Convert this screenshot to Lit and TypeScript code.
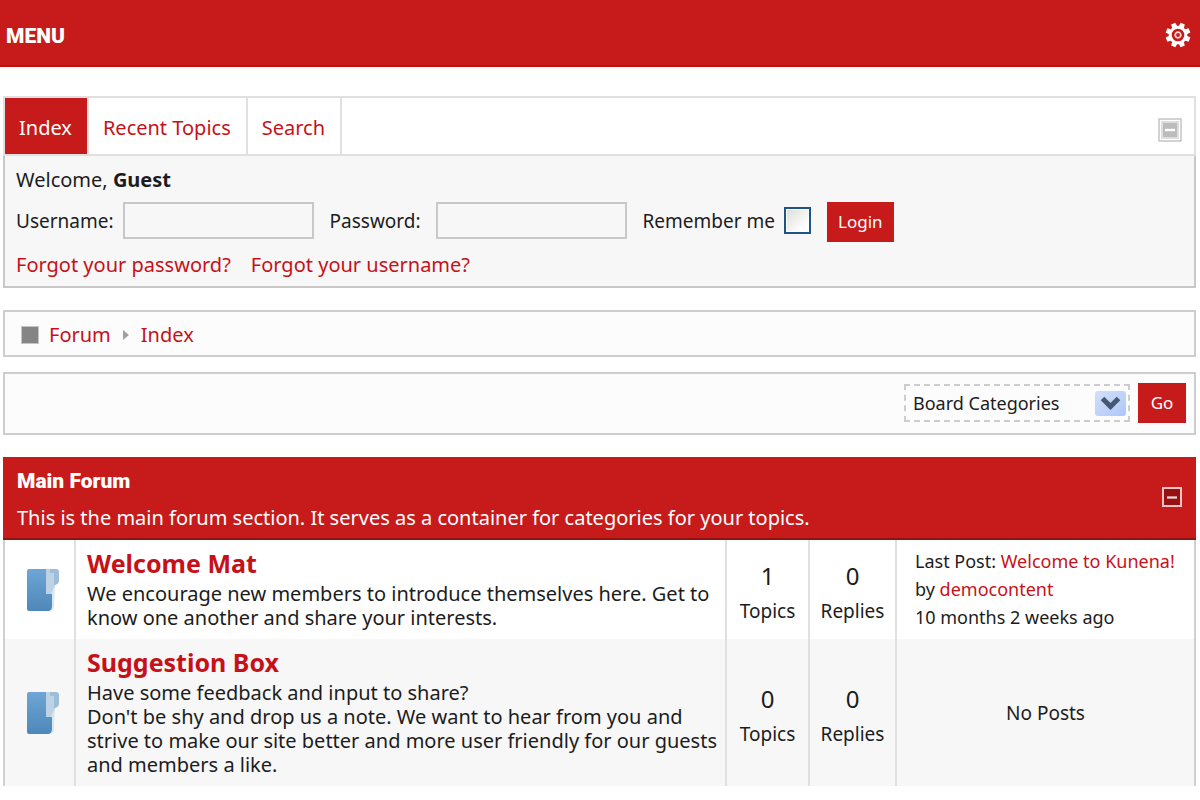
import { LitElement, html, css, svg, nothing } from "lit";
import { customElement, property, state } from "lit/decorators.js";

interface LastPost {
  title: string;
  author: string;
  when: string;
}

interface Category {
  name: string;
  about: string;
  topics: number;
  replies: number;
  lastPost?: LastPost;
}

const CATEGORIES: Category[] = [
  {
    name: "Welcome Mat",
    about:
      "We encourage new members to introduce themselves here. Get to know one another and share your interests.",
    topics: 1,
    replies: 0,
    lastPost: {
      title: "Welcome to Kunena!",
      author: "democontent",
      when: "10 months 2 weeks ago",
    },
  },
  {
    name: "Suggestion Box",
    about:
      "Have some feedback and input to share?\nDon't be shy and drop us a note. We want to hear from you and strive to make our site better and more user friendly for our guests and members a like.",
    topics: 0,
    replies: 0,
  },
];

const TABS = ["Index", "Recent Topics", "Search"];

const TEETH = [22.5, 67.5, 112.5, 157.5, 202.5, 247.5, 292.5, 337.5];

const gearIcon = html`
  <svg width="26" height="26" viewBox="-13 -13 26 26" aria-hidden="true">
    ${TEETH.map(
      (angle) => svg`<path d="M-2.7-8 L-2.3-12.4 L2.3-12.4 L2.7-8 Z" fill="#fff" transform="rotate(${angle})"/>`
    )}
    <circle r="7.8" fill="none" stroke="#fff" stroke-width="3" />
    <circle r="2.8" fill="none" stroke="#fbdada" stroke-width="1.8" />
  </svg>
`;

const folderIcon = html`
  <svg width="34" height="44" viewBox="0 0 34 44" aria-hidden="true">
    <defs>
      <linearGradient id="cover" x1="0" y1="0" x2="0" y2="1">
        <stop offset="0" stop-color="#6ea6d6" />
        <stop offset="1" stop-color="#4e88b8" />
      </linearGradient>
    </defs>
    <path d="M19 1h10v17l-1 20q0 4-3 4h-6z" fill="#dce6ef" />
    <path d="M20 1h9q4 0 4 3v8q0 4-4 5l-4 9h-5z" fill="#bdd2e4" />
    <path d="M24 1h5q4 0 4 3v8q0 4-4 5h-1V5h-4z" fill="#9dbdd8" />
    <path d="M3 1h17v25h6v12q0 5-4 5H3q-2 0-2-2V3q0-2 2-2z" fill="url(#cover)" />
  </svg>
`;

@customElement("forum-category-table")
class ForumCategoryTable extends LitElement {
  @property({ attribute: false }) categories: Category[] = [];

  static styles = css`
    :host {
      display: block;
    }
    .table {
      width: 100%;
      border-collapse: collapse;
      table-layout: fixed;
      border-left: 2px solid #d0d0d0;
      border-right: 2px solid #d0d0d0;
    }
    .icon-col {
      width: 71px;
    }
    .topics-col {
      width: 83px;
    }
    .replies-col {
      width: 87px;
    }
    .last-col {
      width: 299px;
    }
    .row:nth-child(even) {
      background: #f7f7f7;
    }
    .cell {
      padding: 0;
      text-align: center;
      vertical-align: middle;
      border-left: 2px solid #e0e0e0;
      font-size: 19px;
    }
    .cell:first-child {
      border-left: 0;
    }
    .icon {
      line-height: 0;
    }
    .icon svg {
      margin-left: 6px;
    }
    .cell.info {
      padding: 8px 0 9px 11px;
      text-align: left;
      vertical-align: top;
      font-size: 20px;
    }
    .name {
      margin: 0 0 4px;
      font-size: 25px;
      line-height: 30px;
      font-weight: 700;
    }
    .link {
      color: #c71118;
      text-decoration: none;
    }
    .about {
      margin: 0;
      line-height: 24px;
      white-space: pre-line;
    }
    .cell.stat {
      padding-top: 7px;
    }
    .count {
      display: block;
      font-size: 24px;
      line-height: 36px;
    }
    .unit {
      display: block;
      line-height: 34px;
    }
    .cell.last {
      padding: 7px 0 7px 18px;
      text-align: left;
      vertical-align: top;
      font-size: 18px;
      line-height: 28px;
      white-space: nowrap;
    }
  `;

  render() {
    return html`
      <table class="table">
        <colgroup>
          <col class="icon-col" />
          <col />
          <col class="topics-col" />
          <col class="replies-col" />
          <col class="last-col" />
        </colgroup>
        <tbody>
          ${this.categories.map(
            (c) => html`
              <tr class="row">
                <td class="cell icon">${folderIcon}</td>
                <td class="cell info">
                  <h3 class="name"><a class="link" href="#">${c.name}</a></h3>
                  <p class="about">${c.about}</p>
                </td>
                <td class="cell stat"><span class="count">${c.topics}</span><span class="unit">Topics</span></td>
                <td class="cell stat"><span class="count">${c.replies}</span><span class="unit">Replies</span></td>
                ${c.lastPost
                  ? html`<td class="cell last">
                      <div>Last Post: <a class="link" href="#">${c.lastPost.title}</a></div>
                      <div>by <a class="link" href="#">${c.lastPost.author}</a></div>
                      <div>${c.lastPost.when}</div>
                    </td>`
                  : html`<td class="cell">No Posts</td>`}
              </tr>
            `
          )}
        </tbody>
      </table>
    `;
  }
}

@customElement("app-root")
class AppRoot extends LitElement {
  @state() private tab = 0;
  @state() private loginOpen = true;
  @state() private forumOpen = true;

  static styles = css`
    :host {
      display: block;
      color: #1c1c1c;
      background: #fff;
      font-family: "Noto Sans", "DejaVu Sans", sans-serif;
      font-size: 20px;
      line-height: 24px;
    }
    * {
      box-sizing: border-box;
    }
    .topbar {
      display: flex;
      align-items: flex-end;
      justify-content: space-between;
      padding: 22px 9px 14px 6px;
      background: #c71b1b;
      border-bottom: 2px solid #c30d10;
      color: #fff;
    }
    .topbar .icon-button {
      align-self: flex-start;
    }
    .display {
      margin: 0;
      font-family: "Roboto", sans-serif;
      font-weight: 900;
      font-size: 21px;
      line-height: 27px;
    }
    .topbar .display {
      line-height: 29px;
    }
    .icon-button {
      display: block;
      padding: 0;
      border: 0;
      background: none;
      line-height: 0;
    }
    .content {
      display: flex;
      flex-direction: column;
      padding: 29px 4px 0 3px;
    }
    .tabs {
      display: flex;
      align-items: stretch;
      border: 2px solid #e0e0e0;
      background: #fff;
    }
    .tab {
      padding: 18px 15px 14px 14px;
      border-right: 2px solid #e0e0e0;
      color: #c71118;
      text-decoration: none;
    }
    .tab.active {
      background: #c71b1b;
      color: #fff;
    }
    .tabs .icon-button {
      margin: 8px 12px 0 auto;
    }
    .login {
      padding: 12px 12px 9px 11px;
      border: 2px solid #c8c8c8;
      border-top: 0;
      background: #f7f7f7;
    }
    .welcome {
      margin: 0 0 10px;
    }
    .form {
      display: flex;
      flex-wrap: wrap;
      align-items: flex-start;
      gap: 16px;
      font-size: 19px;
    }
    .field {
      display: flex;
      align-items: center;
      gap: 9px;
      min-height: 37px;
    }
    .label {
      min-width: 97px;
    }
    .input {
      width: 191px;
      height: 37px;
      padding: 0 8px;
      border: 2px solid #c8c8c8;
      border-radius: 0;
      background: #f7f7f7;
      font: inherit;
      outline: 0;
    }
    .check {
      appearance: none;
      width: 27px;
      height: 27px;
      margin: 0;
      border: 2px solid #1f5586;
      background: linear-gradient(135deg, #dcdcd7, #fff 80%);
      box-shadow: inset 0 0 0 1px #fff;
    }
    .button {
      min-width: 48px;
      height: 40px;
      padding: 0 11px;
      border: 0;
      background: #c71b1b;
      color: #fff;
      font: inherit;
      font-size: 17px;
    }
    .help {
      display: flex;
      gap: 20px;
      margin-top: 11px;
    }
    .link {
      color: #c71118;
      text-decoration: none;
    }
    .crumbs {
      display: flex;
      align-items: center;
      margin-top: 22px;
      padding: 11px 16px 8px;
      border: 2px solid #cdcdcd;
      background: #fcfcfc;
    }
    .marker {
      width: 18px;
      height: 18px;
      margin-right: 10px;
      border: 1px solid #c4c4c4;
      background: #858585;
    }
    .arrow {
      margin: 0 12px;
      border: 5px solid transparent;
      border-left: 6px solid #a0a0a0;
      border-right: 0;
    }
    .jump {
      display: flex;
      align-items: center;
      justify-content: flex-end;
      gap: 8px;
      margin-top: 15px;
      padding: 9px 8px 10px;
      border: 2px solid #cdcdcd;
      background: #fcfcfc;
    }
    .picker {
      position: relative;
    }
    .select {
      display: block;
      appearance: none;
      width: 226px;
      height: 38px;
      padding: 0 40px 0 7px;
      border: 2px dashed #cdcdcd;
      border-radius: 0;
      background: #fcfcfc;
      color: #1c1c1c;
      font: inherit;
      font-size: 18px;
    }
    .drop {
      position: absolute;
      right: 4px;
      top: 7px;
      pointer-events: none;
    }
    .section {
      display: flex;
      align-items: center;
      justify-content: space-between;
      margin-top: 22px;
      padding: 11px 14px 8px;
      border-bottom: 2px solid #8d1410;
      background: #c71b1b;
      color: #fff;
    }
    .section .icon-button {
      margin-bottom: 4px;
    }
    .summary {
      margin: 11px 0 0;
    }
  `;

  private toggleLogin() {
    this.loginOpen = !this.loginOpen;
  }

  private toggleForum() {
    this.forumOpen = !this.forumOpen;
  }

  render() {
    return html`
      <header class="topbar">
        <h1 class="display">MENU</h1>
        <button class="icon-button" aria-label="Settings">${gearIcon}</button>
      </header>
      <main class="content">
        <nav class="tabs">
          ${TABS.map(
            (t, i) => html`<a
              class="tab ${i === this.tab ? "active" : ""}"
              href="#"
              @click=${() => (this.tab = i)}
              >${t}</a
            >`
          )}
          <button class="icon-button" aria-label="Collapse login" @click=${this.toggleLogin}>
            <svg width="24" height="24" viewBox="0 0 24 24">
              <rect x="1" y="1" width="22" height="22" fill="#fff" stroke="#c4c4c4" stroke-width="1.5" />
              <rect x="3" y="3" width="18" height="18" fill="#dedede" />
              <rect x="5" y="5" width="14" height="14" fill="#bcbcbc" />
              <path d="M7 12h10" stroke="#fff" stroke-width="2.4" />
            </svg>
          </button>
        </nav>
        ${this.loginOpen
          ? html`<section class="login">
              <p class="welcome">Welcome, <b>Guest</b></p>
              <form class="form" @submit=${(e: Event) => e.preventDefault()}>
                <div class="field">
                  <label class="label" for="user">Username:</label>
                  <input class="input" id="user" type="text" />
                </div>
                <div class="field">
                  <label class="label" for="pass">Password:</label>
                  <input class="input" id="pass" type="password" />
                </div>
                <div class="field">
                  <label for="remember">Remember me</label>
                  <input class="check" id="remember" type="checkbox" />
                </div>
                <button class="button">Login</button>
              </form>
              <div class="help">
                <a class="link" href="#">Forgot your password?</a>
                <a class="link" href="#">Forgot your username?</a>
              </div>
            </section>`
          : nothing}
        <nav class="crumbs" aria-label="Breadcrumb">
          <span class="marker"></span>
          <a class="link" href="#">Forum</a>
          <span class="arrow"></span>
          <a class="link" href="#">Index</a>
        </nav>
        <form class="jump" @submit=${(e: Event) => e.preventDefault()}>
          <div class="picker">
            <select class="select" aria-label="Board">
              <option>Board Categories</option>
            </select>
            <svg class="drop" width="31" height="25" viewBox="0 0 31 25" aria-hidden="true">
              <defs>
                <linearGradient id="face" x1="0" y1="0" x2="1" y2="1">
                  <stop offset="0" stop-color="#d3e0fb" />
                  <stop offset="1" stop-color="#aec6f8" />
                </linearGradient>
              </defs>
              <rect width="31" height="25" rx="3" fill="url(#face)" />
              <path d="M7.500 7.500l8 8 8-8" fill="none" stroke="#465873" stroke-width="5" />
            </svg>
          </div>
          <button class="button">Go</button>
        </form>
        <section>
          <header class="section">
            <div>
              <h2 class="display">Main Forum</h2>
              <p class="summary">
                This is the main forum section. It serves as a container for categories for your topics.
              </p>
            </div>
            <button class="icon-button" aria-label="Collapse forum" @click=${this.toggleForum}>
              <svg width="20" height="20" viewBox="0 0 20 20">
                <rect x="1" y="1" width="18" height="18" fill="#981012" stroke="#efc4c4" stroke-width="2" />
                <path d="M5 10.500h10" stroke="#f6dede" stroke-width="2.2" />
              </svg>
            </button>
          </header>
          ${this.forumOpen
            ? html`<forum-category-table .categories=${CATEGORIES}></forum-category-table>`
            : nothing}
        </section>
      </main>
    `;
  }
}
